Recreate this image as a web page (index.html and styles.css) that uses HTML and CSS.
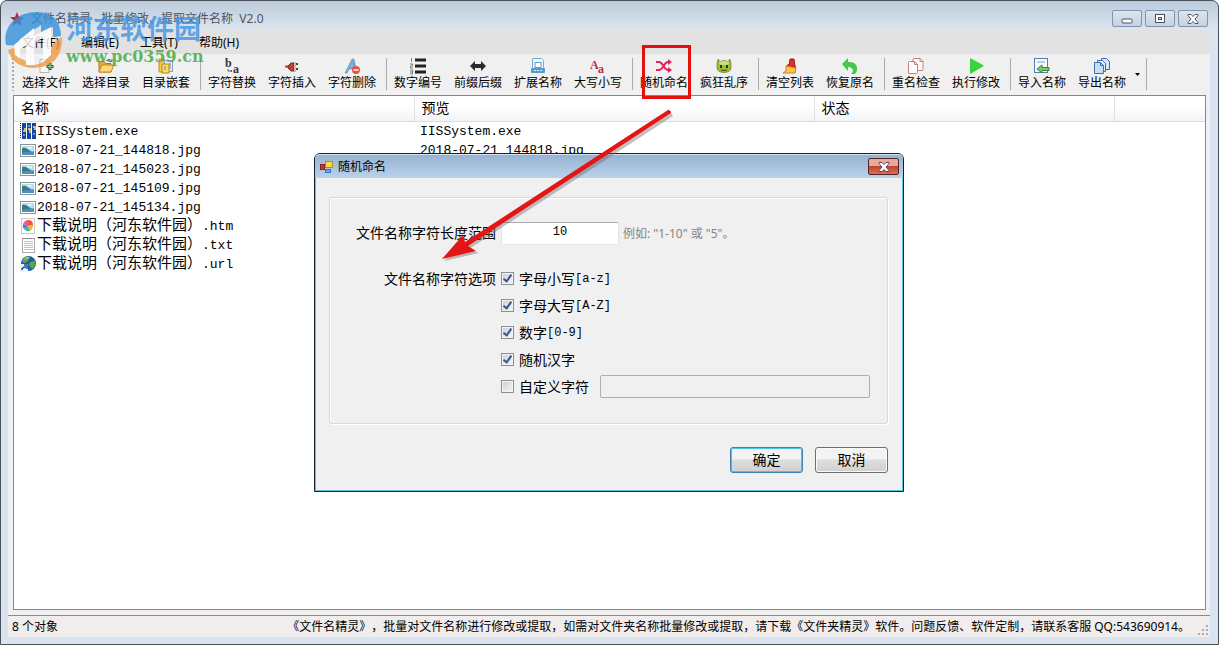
FILE: index.html
```html
<!DOCTYPE html>
<html lang="zh-CN">
<head>
  <meta charset="UTF-8">
  <meta name="viewport" content="width=device-width, initial-scale=1.0">
  <title>文件名精灵</title>
  <link rel="stylesheet" href="styles.css">
</head>

<body>
  <div class="window">
    <header class="titlebar">
      <svg class="app-icon" viewBox="0 0 16 16"><path d="M8 1l2 5 5 .3-4 3.2 1.6 5.5L8 12l-4.600 3L5 9.500 1 6.300 6 6z" fill="#c8202c"/></svg>
      <h1 class="title">文件名精灵 - 批量修改、提取文件名称&nbsp; V2.0</h1>
      <div class="window-buttons">
        <button type="button" aria-label="最小化"><svg viewBox="0 0 14 12"><rect x="2" y="6" width="10" height="4" rx="1" fill="#fff" stroke="#4c5360"/></svg></button>
        <button type="button" aria-label="最大化"><svg viewBox="0 0 14 12"><rect x="2.500" y="1.500" width="9" height="8" fill="#fff" stroke="#4c5360"/><rect x="5.500" y="4.500" width="3" height="2" fill="#dde" stroke="#4c5360"/></svg></button>
        <button type="button" aria-label="关闭"><svg viewBox="0 0 14 12"><path d="M2 1.500h3l2 2 2-2h3v1L9 6l3 3.500v1H9l-2-2-2 2H2v-1L5 6 2 2.500z" fill="#fff" stroke="#4c5360"/></svg></button>
      </div>
    </header>

    <div class="client">
      <nav class="menubar">
        <button type="button">文件(F)</button>
        <button type="button">编辑(E)</button>
        <button type="button">工具(T)</button>
        <button type="button">帮助(H)</button>
      </nav>

      <div class="toolbar">
        <span class="grip"></span>
        <button type="button">
          <svg viewBox="0 0 16 16"><path d="M2 1.500h6l3 3v10H2z" fill="#f8f8f8" stroke="#b5b5b5"/><path d="M8 1.500v3h3" fill="none" stroke="#b5b5b5"/><path d="M12 5v7M8.500 8.500h7" stroke="#2d5d38" stroke-width="3"/><path d="M12 6v5M9.500 8.500h5" stroke="#9bd89b"/></svg>
          选择文件
        </button>
        <button type="button">
          <svg viewBox="0 0 16 16"><path d="M1 14V3.500h5l1.500 2H13V14z" fill="#e8a93a" stroke="#b57a1c"/><path d="M1 14l3-7h12l-3 7z" fill="#ffd978" stroke="#c08a2a"/><path d="M8 3c2-2 4-2 6 0m0-2v2.500h-3" fill="none" stroke="#557b9c"/></svg>
          选择目录
        </button>
        <button type="button">
          <svg viewBox="0 0 16 16"><path d="M1 1h5l1 2v11H1z" fill="#f7c853" stroke="#c38d22"/><rect x="6.500" y="2.500" width="8" height="11" fill="#e9eef5" stroke="#8ba0b8"/><rect x="4" y="6" width="7" height="9" fill="#fbdc69" stroke="#bb871c"/><path d="M7 8v4M12 5v6" stroke="#6785a6"/></svg>
          目录嵌套
        </button>
        <span class="separator"></span>
        <button type="button">
          <svg viewBox="0 0 16 16"><text x="1" y="9" class="icon-letter">b</text><text x="9" y="15" class="icon-letter">a</text><path d="M4 11v2h4m-1-1l1 1-1 1" fill="none" stroke="#3d5c9c"/></svg>
          字符替换
        </button>
        <button type="button">
          <svg viewBox="0 0 16 16"><path d="M1 8.500h4" stroke="#b64538" stroke-width="2"/><path d="M4 8l3-3h3v8H7L4 10z" fill="#b64533" stroke="#702b20"/><rect x="10" y="4" width="2" height="10" fill="#d9b9a3"/><path d="M12 6h2M12 11h2" stroke="#573c30" stroke-width="2"/></svg>
          字符插入
        </button>
        <button type="button">
          <svg viewBox="0 0 16 16"><path d="M1 15L8 1h2l3 14h-3l-1-4H5l-2 4zM6.500 9H9L8.300 5z" fill="#75addd" stroke="#4c8fcb" stroke-width=".6"/><circle cx="12" cy="12" r="4" fill="#e85143"/><path d="M9.500 12h5" stroke="#fff" stroke-width="1.500"/></svg>
          字符删除
        </button>
        <span class="separator"></span>
        <button type="button">
          <svg viewBox="0 0 16 16"><path d="M5 2h11M5 8h11M5 14h11" stroke="#222" stroke-width="3"/><path d="M1.500 0v4M0 6h2.500v2H.5v2h2.500M0 12h2.500v4H0m0-2h2.500" fill="none" stroke="#555" stroke-width=".7"/></svg>
          数字编号
        </button>
        <button type="button">
          <svg viewBox="0 0 16 16"><path d="M0 8l5-5v3h6V3l5 5-5 5v-3H5v3z" fill="#2a2a2a"/></svg>
          前缀后缀
        </button>
        <button type="button">
          <svg viewBox="0 0 16 16"><path d="M2.500.5h9l2 2v9h-11z" fill="#eff8ff" stroke="#7caed5"/><rect x="5" y="4.500" width="6" height="5" fill="#fff" stroke="#6899c0"/><rect x="1" y="10" width="14" height="5" rx="1" fill="#579bd0"/><path d="M4 12.500h8" stroke="#ddefff" stroke-dasharray="2 1"/></svg>
          扩展名称
        </button>
        <button type="button">
          <svg viewBox="0 0 16 16"><text x="0" y="11" class="icon-letter icon-red">A</text><text x="8" y="15" class="icon-letter icon-red">a</text></svg>
          大写小写
        </button>
        <span class="separator"></span>
        <button type="button" class="marked">
          <svg viewBox="0 0 16 16"><path d="M0 4h3c4 0 5 8 9 8h2M0 12h3c4 0 5-8 9-8h2" fill="none" stroke="#e5215c" stroke-width="2"/><path d="M12 1l4 3-4 3zM12 9l4 3-4 3z" fill="#e5215c"/></svg>
          随机命名
        </button>
        <button type="button">
          <svg viewBox="0 0 16 16"><path d="M2 1l2 2.500q4-2 8 0L14 1l1 5v4c0 6-14 6-14 0V6z" fill="#9bbd35" stroke="#66802a" stroke-width=".7"/><ellipse cx="8" cy="5" rx="5" ry="2" fill="#d1df76"/><path d="M5 7v3M11 7v3" stroke="#29381b" stroke-width="2"/><path d="M5 12q3 1 6 0" fill="none" stroke="#41521c"/></svg>
          疯狂乱序
        </button>
        <span class="separator"></span>
        <button type="button">
          <svg viewBox="0 0 16 16"><path d="M8 1h4l1 7-6 1z" fill="#de3027" stroke="#a31e1b"/><path d="M6 6l8 2v3L4 8z" fill="#d72d24"/><path d="M4 8l10 2-1 5H1l3-2z" fill="#ffc744" stroke="#d27c20"/></svg>
          清空列表
        </button>
        <button type="button">
          <svg viewBox="0 0 16 16"><path d="M0 6l6-6v4c8-1 12 6 7 12H9c4-4 1-7-3-7v4z" fill="#45c94a"/></svg>
          恢复原名
        </button>
        <span class="separator"></span>
        <button type="button">
          <svg viewBox="0 0 16 16"><path d="M5 1.500q0-1 1-1h6l3 3v8q0 1-1 1H5z" fill="#fff" stroke="#d47979"/><path d="M.5 4.500q0-1 1-1h5l3 3v8q0 1-1 1h-8z" fill="#fff" stroke="#d47979"/><path d="M12 .5v3h3M6.500 3.500v3h3" fill="none" stroke="#d47979"/></svg>
          重名检查
        </button>
        <button type="button">
          <svg viewBox="0 0 16 16"><path d="M2 1q0-1 1-.5L15 7q1 1 0 1.500L3 15.500Q2 16 2 15z" fill="#38d43d"/></svg>
          执行修改
        </button>
        <span class="separator"></span>
        <button type="button">
          <svg viewBox="0 0 16 16"><rect x=".5" y=".5" width="13" height="14" fill="#f3f9ff" stroke="#4e7fb0"/><path d="M3 4h8" stroke="#7aa5cf"/><path d="M3 11l5-4v2.500h7v3H8V15z" fill="#80c763" stroke="#35863b"/></svg>
          导入名称
        </button>
        <button type="button">
          <svg viewBox="0 0 16 16"><path d="M7.500.5h5l3 3v8h-8z" fill="#d6e8fb" stroke="#436dab"/><path d="M3.500 2.500h5l3 3v8h-8z" fill="#e0efff" stroke="#436dab"/><path d="M.5 4.500h6l3 3v8h-9z" fill="#c6def8" stroke="#436dab"/><path d="M6.500 4.500v3h3" fill="none" stroke="#436dab"/></svg>
          导出名称
        </button>
        <button type="button" class="drop" aria-label="更多"><svg viewBox="0 0 5 3"><path d="M0 0h5L2.500 3z"/></svg></button>
        <span class="separator"></span>
      </div>

      <main class="list">
        <table class="files">
          <thead>
            <tr><th class="col-name">名称</th><th class="col-preview">预览</th><th class="col-state">状态</th><th></th></tr>
          </thead>
          <tbody>
            <tr>
              <td><svg class="file-icon" viewBox="0 0 16 16"><path d="M.5 0v16" stroke="#222" stroke-dasharray="1 1"/><path d="M2 0h4v16H2zM7 0h4v16H7zM12 0h4v16h-4z" fill="#1546a0"/><path d="M3 8h2V5M8 6h2v4M13 4h2v3" fill="none" stroke="#ffe36c" stroke-width="1.500"/><path d="M3 12h2M8 3h2M13 11h2" stroke="#4da1e8" stroke-width="2"/></svg>IISSystem.exe</td>
              <td>IISSystem.exe</td><td></td><td></td>
            </tr>
            <tr>
              <td><svg class="file-icon" viewBox="0 0 16 16"><use href="#picture"/></svg>2018-07-21_144818.jpg</td>
              <td>2018-07-21_144818.jpg</td><td></td><td></td>
            </tr>
            <tr>
              <td><svg class="file-icon" viewBox="0 0 16 16"><use href="#picture"/></svg>2018-07-21_145023.jpg</td>
              <td></td><td></td><td></td>
            </tr>
            <tr>
              <td><svg class="file-icon" viewBox="0 0 16 16"><use href="#picture"/></svg>2018-07-21_145109.jpg</td>
              <td></td><td></td><td></td>
            </tr>
            <tr>
              <td><svg class="file-icon" viewBox="0 0 16 16"><use href="#picture"/></svg>2018-07-21_145134.jpg</td>
              <td></td><td></td><td></td>
            </tr>
            <tr>
              <td><svg class="file-icon" viewBox="0 0 16 16"><rect x="1.500" y=".5" width="13" height="15" fill="#fff" stroke="#ccc"/><path d="M8 8L3 6q2-4 5-4z" fill="#e35ba0"/><path d="M8 8V2q5 0 5 5z" fill="#ef513e"/><path d="M8 8l5-1q0 4-3 6z" fill="#f5b42c"/><path d="M8 8l2 5q-4 1-6-2z" fill="#37b8a8"/><path d="M8 8l-4 3q-2-2-1-5z" fill="#6d68d8"/></svg><span class="cn">下载说明（河东软件园）</span>.htm</td>
              <td></td><td></td><td></td>
            </tr>
            <tr>
              <td><svg class="file-icon" viewBox="0 0 16 16"><rect x="2.500" y="1.500" width="12" height="14" fill="#fff" stroke="#aaa"/><path d="M3 1.500h11" stroke="#777" stroke-dasharray="1 1"/><path d="M4 4.500h9M4 6.500h9M4 8.500h9M4 10.500h9M4 12.500h9" stroke="#bbc4c8"/></svg><span class="cn">下载说明（河东软件园）</span>.txt</td>
              <td></td><td></td><td></td>
            </tr>
            <tr>
              <td><svg class="file-icon" viewBox="0 0 16 16"><circle cx="8.500" cy="7.500" r="7.500" fill="#215da7"/><path d="M3 3q4-4 7-2l-2 4-3 2-3-1zM10 6l5-1q1 5-3 8l-3-4z" fill="#58ad42"/><path d="M5 3q3-2 4-1" stroke="#b8e0ee" fill="none"/><rect x="0" y="8" width="8" height="8" fill="#e9f3fc"/><path d="M2 14q0-3 4-3m-2-2h3v4" fill="none" stroke="#164c92" stroke-width="1.500"/></svg><span class="cn">下载说明（河东软件园）</span>.url</td>
              <td></td><td></td><td></td>
            </tr>
          </tbody>
        </table>
      </main>

      <footer class="statusbar">
        <span>8 个对象</span>
        <span class="notice">《文件名精灵》，批量对文件名称进行修改或提取，如需对文件夹名称批量修改或提取，请下载《文件夹精灵》软件。问题反馈、软件定制，请联系客服 QQ:543690914。</span>
        <svg class="sizegrip" viewBox="0 0 12 12"><path d="M8 0h2v2H8zM4 4h2v2H4zM8 4h2v2H8zM0 8h2v2H0zM4 8h2v2H4zM8 8h2v2H8z" fill="#b0aaa8"/></svg>
      </footer>
    </div>
  </div>

  <!-- shared picture file icon -->
  <svg class="defs" aria-hidden="true">
    <symbol id="picture" viewBox="0 0 16 16">
      <rect x=".5" y="2.500" width="15" height="12" fill="#fff" stroke="#8c9691"/>
      <rect x="2" y="4" width="12" height="9" fill="#b6dcf2"/>
      <path d="M2 6q4-1 7 2t5 1v2H2z" fill="#397a83"/>
      <path d="M2 11q5-2 12-1v3H2z" fill="#4d8fc4"/>
      <path d="M7 6h5" stroke="#fff"/>
    </symbol>
  </svg>

  <form class="dialog">
    <div class="dialog-title">
      <svg class="dialog-icon" viewBox="0 0 14 14"><rect x="5.500" y="1.500" width="7" height="6" fill="#ffd445" stroke="#b38a20"/><rect x=".5" y="4.500" width="4" height="5" fill="#c93838" stroke="#8c2020"/><rect x="5.500" y="9.500" width="5" height="3" fill="#6a9de3" stroke="#4272bd"/></svg>
      <h2 class="title">随机命名</h2>
      <button type="button" class="close" aria-label="关闭"><svg viewBox="0 0 14 12"><path d="M2 1.500h3l2 2 2-2h3v1L9 6l3 3.500v1H9l-2-2-2 2H2v-1L5 6 2 2.500z" fill="#fff" stroke="#5d4450"/></svg></button>
    </div>
    <div class="dialog-body">
      <fieldset class="group">
        <label class="caption" for="length">文件名称字符长度范围</label>
        <div class="length">
          <input type="text" id="length" value="10">
          <span class="hint">例如: "1-10" 或 "5"。</span>
        </div>
        <span class="caption" id="options-label">文件名称字符选项</span>
        <div class="options" role="group" aria-labelledby="options-label">
          <label><input type="checkbox" checked>字母小写<span class="range">[a-z]</span></label>
          <label><input type="checkbox" checked>字母大写<span class="range">[A-Z]</span></label>
          <label><input type="checkbox" checked>数字<span class="range">[0-9]</span></label>
          <label><input type="checkbox" checked>随机汉字</label>
          <div class="custom">
            <label><input type="checkbox">自定义字符</label>
            <input type="text" aria-label="自定义字符" disabled>
          </div>
        </div>
      </fieldset>
      <div class="actions">
        <button type="submit" class="primary">确定</button>
        <button type="button">取消</button>
      </div>
    </div>
  </form>

  <svg class="arrow" viewBox="0 0 250 170" aria-hidden="true">
    <path d="M241 13l2 3L39 149l10 4-35 8 20-21 3 5z" fill="#666" opacity=".4"/>
    <path d="M238 10q3 0 3 3L38 146l8 5-34 8 21-24 2 7z" fill="#e41513"/>
  </svg>

  <div class="watermark">
    <svg class="logo" viewBox="0 0 58 58">
      <path d="M1 34C-3 14 14 0 33 1q22 1 23 24l-8 1V16L36 21v-7L15 28v7z" fill="#3792d9"/>
      <path d="M3 39l9-3v10l9 4V35h8v19q16-2 18-20 5-5 10-8 1 30-29 31Q8 56 3 39z" fill="#f19a43"/>
      <path d="M9 34l20-17v8l17-9v28l-8 7V27l-9 5v22h-8V35l-6 3v9l-5-3z" fill="#fff"/>
    </svg>
    <div class="site">
      <span class="site-name">河东软件园</span>
      <span class="site-url">www.pc0359.cn</span>
    </div>
  </div>
</body>
</html>
```

FILE: styles.css
```css
* {
  box-sizing: border-box;
}

body {
  margin: 0;
  font-family: "Noto Sans", "Noto Sans CJK SC", sans-serif;
  font-size: 12px;
  line-height: 16px;
  text-spacing-trim: space-all;
  color: #000;
  background: #fff;
}

button {
  font: inherit;
  color: inherit;
  padding: 0;
}

svg {
  display: block;
  flex: none;
  overflow: visible;
}

.window {
  display: flex;
  flex-direction: column;
  min-height: 100vh;
  padding: 0 8px 7px 7px;
  background: linear-gradient(#bccada, #dde6f0 30px, #d8e4f0 60px);
  border: 1px solid #4b5058;
  border-radius: 7px 7px 0 0;
}

.titlebar {
  display: flex;
  align-items: center;
  height: 29px;
  padding-top: 6px;
}

.app-icon {
  width: 16px;
  height: 16px;
  margin: 0 6px 0 1px;
}

.title {
  margin: 0;
  flex: 1;
  font-size: 12px;
  font-weight: normal;
}

.titlebar .title {
  color: #4f5661;
}

.window-buttons {
  display: flex;
  gap: 3px;
  padding-right: 2px;
}

.window-buttons button {
  display: flex;
  align-items: center;
  justify-content: center;
  width: 30px;
  height: 17px;
  background: linear-gradient(#dce5ef, #c5d2e1);
  border: 1px solid #8494ad;
  border-radius: 2px;
}

.window-buttons svg,
.close svg {
  width: 14px;
  height: 12px;
}

.client {
  display: flex;
  flex: 1;
  flex-direction: column;
  background: #f0f0f0;
}

.menubar {
  display: flex;
  gap: 14px;
  height: 24px;
  padding: 2px 0 0 14px;
  background: #e2e2e2;
}

.menubar button {
  width: 45px;
  border: none;
  background: none;
  text-align: left;
  white-space: nowrap;
}

.toolbar {
  display: flex;
  height: 41px;
  padding: 4px 0 0 4px;
}

.grip {
  width: 4px;
  height: 33px;
  background: repeating-linear-gradient(#aaa 0 2px, transparent 2px 4px) no-repeat 0 0 / 2px 100%;
}

.toolbar button {
  display: flex;
  flex-direction: column;
  align-items: center;
  gap: 1px;
  width: 60px;
  border: none;
  background: none;
  white-space: nowrap;
}

.toolbar button svg {
  width: 16px;
  height: 16px;
}

.toolbar .drop {
  width: 10px;
  padding: 15px 0 0 1px;
}

.toolbar .drop svg {
  width: 5px;
  height: 3px;
}

.separator {
  width: 6px;
  height: 32px;
  background: linear-gradient(#aaa, #aaa) no-repeat 4px 0 / 1px 100%;
}

.icon-letter {
  font: bold 12px "Liberation Serif", serif;
  fill: #333;
}

.icon-red {
  fill: #b6303b;
}

/* red frame over the button */
.marked {
  position: relative;
}

.marked::after {
  content: "";
  position: absolute;
  top: -13px;
  left: 8px;
  width: 43px;
  height: 48px;
  border: 3px solid #e4100e;
}

.list {
  flex: 1;
  margin: 0 4px 5px 5px;
  background: #fff;
  border: 1px solid #828790;
}

.files {
  width: 100%;
  table-layout: fixed;
  border-collapse: collapse;
  font-family: "Liberation Mono", "Noto Sans CJK SC", monospace;
  font-size: 13px;
}

.files th {
  height: 25px;
  padding: 2px 7px 0;
  font-size: 14px;
  font-weight: normal;
  text-align: left;
  background: linear-gradient(#fff 40%, #f2f3f5);
  border-bottom: 1px solid #d9dbde;
  border-right: 1px solid #dfe1e4;
}

.files th:last-child {
  border-right: none;
}

.col-name,
.col-preview {
  width: 400px;
}

.col-state {
  width: 300px;
}

.files td {
  height: 19px;
  padding: 0 6px;
  line-height: 19px;
  white-space: nowrap;
}

.file-icon {
  display: inline-block;
  width: 16px;
  height: 16px;
  margin-right: 1px;
  vertical-align: middle;
}

.cn {
  font-size: 15px;
}

.statusbar {
  display: flex;
  align-items: center;
  height: 22px;
  padding-left: 4px;
  background: #f1edec;
  border-top: 1px solid #8b8b8b;
}

.notice {
  margin-left: auto;
  white-space: nowrap;
}

.sizegrip {
  width: 12px;
  height: 12px;
  align-self: flex-end;
  margin-left: 8px;
}

.defs {
  display: none;
}

.dialog {
  position: absolute;
  top: 153px;
  left: 314px;
  width: 590px;
  background: #f0f0f0;
  border: 1px solid #10202c;
  border-radius: 6px 6px 0 0;
  box-shadow: inset 0 0 0 1px #62c4e2;
  font-size: 14px;
}

.dialog-title {
  display: flex;
  align-items: center;
  height: 24px;
  padding: 0 4px 0 5px;
  background: linear-gradient(#96b3d2, #bad1eb);
  border-radius: 5px 5px 0 0;
  border-top: 1px solid #d4e3f2;
}

.dialog-icon {
  width: 14px;
  height: 14px;
  margin-right: 4px;
}

.close {
  display: flex;
  align-items: center;
  justify-content: center;
  width: 31px;
  height: 17px;
  background: linear-gradient(#e6a99e 45%, #c5432c 50%, #d7705c);
  border: 1px solid #56232a;
  border-radius: 2px;
}

.dialog-body {
  padding: 19px 15px 18px 14px;
}

.group {
  display: grid;
  grid-template-columns: 166px 1fr;
  gap: 20px 5px;
  margin: 0;
  padding: 24px 0 23px;
  border: 1px solid #d9d9d9;
  border-radius: 3px;
  box-shadow: inset 1px 1px 0 #fff, 1px 1px 0 #fff;
}

.caption {
  text-align: right;
  line-height: 22px;
  white-space: nowrap;
}

.group > span {
  line-height: 27px;
}

.length {
  display: flex;
  align-items: center;
  gap: 4px;
}

.length input {
  width: 118px;
  height: 23px;
  padding: 0 0 3px;
  border: 1px solid #e2e3ea;
  border-top-color: #abadb3;
  border-radius: 2px;
  background: #fff;
  font: 12px "Liberation Mono", monospace;
  text-align: center;
}

.hint {
  color: #858585;
  font-size: 12px;
}

.options label {
  display: flex;
  align-items: center;
  height: 27px;
}

.options input[type="checkbox"] {
  appearance: none;
  width: 13px;
  height: 13px;
  margin: 0 5px 0 0;
  border: 1px solid #8e8f8f;
  background: linear-gradient(135deg, #c9ced6, #f6f6f6);
  box-shadow: inset 0 0 0 1px #f4f4f4;
}

.options input:checked::after {
  content: "";
  display: block;
  width: 3px;
  height: 7px;
  margin: 0 0 0 3px;
  border: solid #3c5390;
  border-width: 0 2px 2px 0;
  transform: rotate(35deg);
}

.range {
  font-family: "Liberation Mono", monospace;
  font-size: 12px;
}

.custom {
  display: flex;
  align-items: center;
  gap: 11px;
}

.custom input[type="text"] {
  flex: 1;
  min-width: 0;
  height: 23px;
  margin-right: 17px;
  background: #f0f0f0;
  border: 1px solid #afafaf;
  border-radius: 2px;
}

.actions {
  display: flex;
  justify-content: flex-end;
  gap: 12px;
  margin-top: 23px;
}

.actions button {
  width: 73px;
  height: 26px;
  background: linear-gradient(#f3f3f3 45%, #dedede 50%, #d0d0d0);
  border: 1px solid #707070;
  border-radius: 3px;
  box-shadow: inset 0 0 0 1px #f9f9f9;
}

.actions .primary {
  border-color: #3c7fb1;
  box-shadow: inset 0 0 0 1px #4cc3e9;
}

.arrow {
  position: absolute;
  top: 100px;
  left: 430px;
  width: 250px;
  height: 170px;
  pointer-events: none;
}

.watermark {
  position: absolute;
  top: 11px;
  left: 5px;
  display: flex;
  gap: 3px;
  opacity: 0.8;
  pointer-events: none;
}

.logo {
  width: 58px;
  height: 58px;
}

.site {
  display: flex;
  flex-direction: column;
  white-space: nowrap;
}

.site-name {
  color: #3f94e4;
  font-size: 27px;
  font-weight: bold;
  line-height: 36px;
}

.site-url {
  color: #44a640;
  font: bold 16px/20px "DejaVu Serif", serif;
}
```
